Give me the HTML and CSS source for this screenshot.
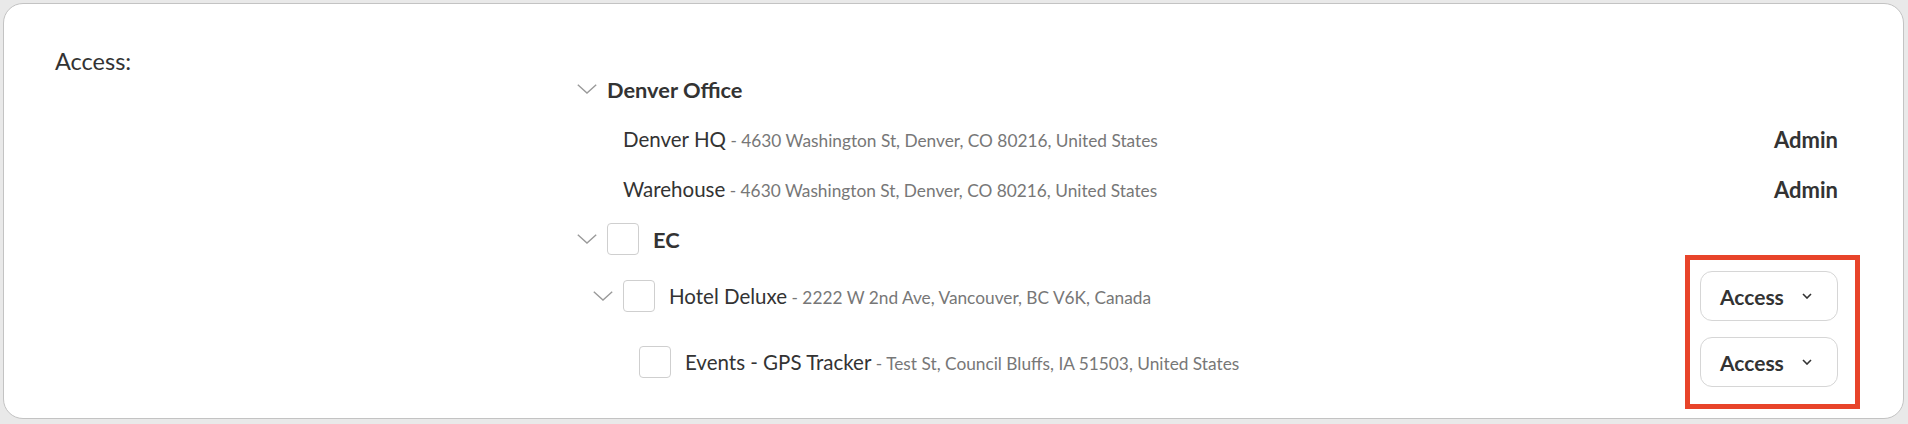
FILE: index.html
```html
<!DOCTYPE html>
<html lang="en">
<head>
<meta charset="utf-8">
<title>Access</title>
<link rel="stylesheet" href="styles.css">
</head>
<body>
<div class="card">
  <div class="label">Access:</div>
  <div class="tree">
    <div class="row l0">
      <span class="chev"><svg width="20" height="10" viewBox="0 0 20 10"><polyline points="0.8,0.8 10,9 19.2,0.8" fill="none" stroke="#9a9a9a" stroke-width="1.4"/></svg></span>
      <span class="group">Denver Office</span>
    </div>
    <div class="row l1">
      <span class="chev empty"></span>
      <span class="text"><span class="name">Denver HQ</span><span class="addr"> - 4630 Washington St, Denver, CO 80216, United States</span></span>
      <span class="role">Admin</span>
    </div>
    <div class="row l1">
      <span class="chev empty"></span>
      <span class="text"><span class="name">Warehouse</span><span class="addr"> - 4630 Washington St, Denver, CO 80216, United States</span></span>
      <span class="role">Admin</span>
    </div>
    <div class="row l0">
      <span class="chev"><svg width="20" height="10" viewBox="0 0 20 10"><polyline points="0.8,0.8 10,9 19.2,0.8" fill="none" stroke="#9a9a9a" stroke-width="1.4"/></svg></span>
      <span class="box"></span>
      <span class="group">EC</span>
    </div>
    <div class="row l1 btnrow">
      <span class="chev"><svg width="20" height="10" viewBox="0 0 20 10"><polyline points="0.8,0.8 10,9 19.2,0.8" fill="none" stroke="#9a9a9a" stroke-width="1.4"/></svg></span>
      <span class="box"></span>
      <span class="text"><span class="name">Hotel Deluxe</span><span class="addr"> - 2222 W 2nd Ave, Vancouver, BC V6K, Canada</span></span>
      <button class="sel">Access <svg width="10" height="6" viewBox="0 0 10 6"><polyline points="1,1 5,5 9,1" fill="none" stroke="#333" stroke-width="1.6"/></svg></button>
    </div>
    <div class="row l2 btnrow last">
      <span class="chev empty"></span>
      <span class="box"></span>
      <span class="text"><span class="name">Events - GPS Tracker</span><span class="addr"> - Test St, Council Bluffs, IA 51503, United States</span></span>
      <button class="sel">Access <svg width="10" height="6" viewBox="0 0 10 6"><polyline points="1,1 5,5 9,1" fill="none" stroke="#333" stroke-width="1.6"/></svg></button>
    </div>
  </div>
  <div class="highlight"></div>
</div>
</body>
</html>
```
FILE: styles.css
```css
* { box-sizing: border-box; }
html, body { margin: 0; padding: 0; }
body {
  background: #e9e9e9;
  font-family: "Lato", "Open Sans", sans-serif;
  color: #333;
  width: 1908px;
  height: 424px;
  overflow: hidden;
}
.card {
  position: relative;
  margin: 3px 4px 0 3px;
  height: 416px;
  background: #fff;
  border: 1px solid #c3c3c3;
  border-radius: 20px;
  display: grid;
  grid-template-columns: 522px 1fr;
  padding: 44px 65px 0 51px;
}
.label {
  font-size: 23.5px;
  line-height: 26px;
  color: #333;
}
.tree {
  margin-top: 16px;
  display: flex;
  flex-direction: column;
}
.row {
  display: flex;
  align-items: center;
  height: 50px;
}
.row.l1 { padding-left: 16px; }
.row.l2 { padding-left: 32px; }
.row.btnrow { height: 64px; }
.row.last { margin-top: 2px; }
.chev {
  width: 20px;
  height: 10px;
  margin-right: 10px;
  display: flex;
  flex: none;
}
.box {
  width: 32px;
  height: 32px;
  border: 1px solid #cfcfcf;
  border-radius: 4px;
  margin-right: 14px;
  flex: none;
}
.group {
  font-weight: 700;
  font-size: 21.8px;
  color: #333;
}
.text { white-space: pre; }
.name {
  font-size: 20.5px;
  color: #333;
}
.addr {
  font-size: 17.3px;
  color: #777;
}
.role {
  margin-left: auto;
  font-weight: 700;
  font-size: 22px;
  color: #333;
}
.sel {
  margin-left: auto;
  width: 138px;
  height: 50px;
  border: 1px solid #d6d6d6;
  border-radius: 12px;
  background: #fff;
  font-family: inherit;
  font-weight: 700;
  font-size: 21px;
  color: #333;
  display: flex;
  align-items: center;
  justify-content: space-between;
  padding: 0 25px 0 19px;
}
.highlight {
  position: absolute;
  top: 251px;
  right: 43px;
  width: 175px;
  height: 154px;
  border: 5px solid #e8442a;
}
```
